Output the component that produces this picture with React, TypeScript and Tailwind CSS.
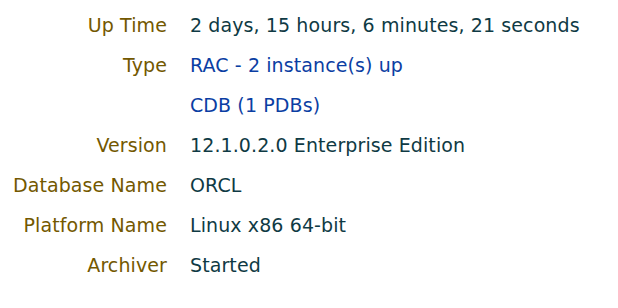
import React from 'react';

type Row = { label: string; value: string; link?: boolean };

const rows: Row[] = [
  { label: 'Up Time', value: '2 days, 15 hours, 6 minutes, 21 seconds' },
  { label: 'Type', value: 'RAC - 2 instance(s) up', link: true },
  { label: '', value: 'CDB (1 PDBs)', link: true },
  { label: 'Version', value: '12.1.0.2.0 Enterprise Edition' },
  { label: 'Database Name', value: 'ORCL' },
  { label: 'Platform Name', value: 'Linux x86 64-bit' },
  { label: 'Archiver', value: 'Started' },
];

const App: React.FC = () => {
  return (
    <div className="w-[618px] h-[308px] bg-white pt-[5px] font-['DejaVu_Sans',Verdana,sans-serif] text-[19px] tracking-[0.1px]">
      <div className="grid grid-cols-[167px_1fr] gap-x-[23px]">
        {rows.map((row, i) => (
          <React.Fragment key={i}>
            <div className="text-right leading-[40px] text-[#735800] whitespace-nowrap">{row.label}</div>
            <div
              className={`leading-[40px] whitespace-nowrap ${
                row.link ? 'text-[#0b3ea3]' : 'text-[#0f3a44]'
              }`}
            >
              {row.value}
            </div>
          </React.Fragment>
        ))}
      </div>
    </div>
  );
};

export default App;
